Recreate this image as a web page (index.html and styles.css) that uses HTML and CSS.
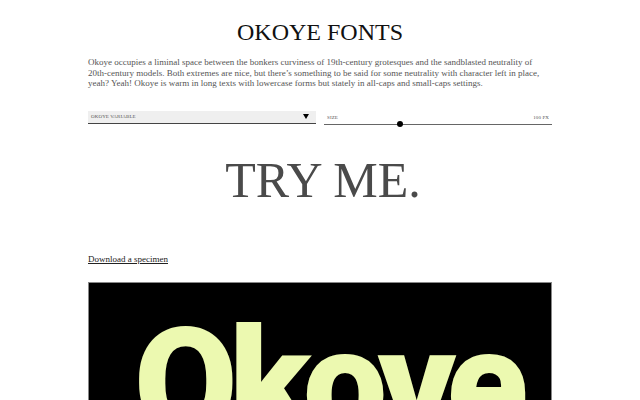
FILE: index.html
```html
<!DOCTYPE html>
<html lang="en">
<head>
<meta charset="utf-8">
<title>Okoye Fonts</title>
<link rel="stylesheet" href="styles.css">
</head>
<body>
<main class="page">
  <h1 class="title">OKOYE FONTS</h1>
  <p class="intro">Okoye occupies a liminal space between the bonkers curviness of 19th-century grotesques and the sandblasted neutrality of 20th-century models. Both extremes are nice, but there’s something to be said for some neutrality with character left in place, yeah? Yeah! Okoye is warm in long texts with lowercase forms but stately in all-caps and small-caps settings.</p>
  <div class="controls">
    <div class="select">
      <span class="select-label">OKOYE VARIABLE</span>
      <svg class="arrow" width="6" height="5" viewBox="0 0 6 5"><polygon points="0,0 6,0 3,5" fill="#000"/></svg>
    </div>
    <div class="slider">
      <div class="slider-labels"><span>SIZE</span><span>100 PX</span></div>
      <div class="track"><span class="thumb"></span></div>
    </div>
  </div>
  <div class="tryme">TRY ME.</div>
  <a class="download" href="#">Download a specimen</a>
  <div class="specimen"><span class="specimen-word">Okoye</span></div>
</main>
</body>
</html>
```
FILE: styles.css
```css
body {
  margin: 0;
  background: #fff;
  font-family: "Liberation Serif", "Times New Roman", serif;
}
.page {
  width: 464px;
  margin: 0 auto;
  padding-top: 16px;
}
.title {
  margin: 0;
  font-size: 24px;
  line-height: 32px;
  font-weight: normal;
  text-align: center;
  color: #111;
}
.intro {
  margin: 9px 0 0;
  font-size: 9px;
  line-height: 10.5px;
  color: #555;
}
.controls {
  display: grid;
  grid-template-columns: 1fr 1fr;
  column-gap: 8px;
  margin-top: 22px;
}
.select {
  height: 12px;
  background: #efefef;
  border-bottom: 1px solid #444;
  display: flex;
  align-items: center;
  justify-content: space-between;
  padding: 0 7px 0 3px;
}
.select-label,
.slider-labels {
  font-size: 5px;
  color: #555;
  letter-spacing: 0.02em;
}
.arrow { display: block; }
.slider {
  display: flex;
  flex-direction: column;
}
.slider-labels {
  height: 13px;
  display: flex;
  align-items: center;
  justify-content: space-between;
  padding: 0 3px;
}
.track {
  height: 1px;
  background: #666;
  position: relative;
}
.thumb {
  position: absolute;
  left: 73px;
  top: -2.5px;
  width: 6px;
  height: 6px;
  border-radius: 50%;
  background: #000;
}
.tryme {
  margin-top: 30px;
  padding-left: 6px;
  font-size: 50px;
  line-height: 50px;
  text-align: center;
  color: #4a4a4a;
}
.download {
  display: block;
  width: max-content;
  margin-top: 48px;
  font-size: 9px;
  line-height: 12px;
  color: #222;
  text-decoration: underline;
}
.specimen {
  margin-top: 17px;
  height: 200px;
  background: #000;
  border: 1px solid #888;
  overflow: hidden;
  text-align: center;
}
.specimen-word {
  display: block;
  padding: 26px 0 0 14px;
  font-family: Roboto, "Liberation Sans", sans-serif;
  font-weight: 900;
  font-size: 150px;
  line-height: 150px;
  color: #ecf9b0;
  letter-spacing: -0.055em;
}
```
